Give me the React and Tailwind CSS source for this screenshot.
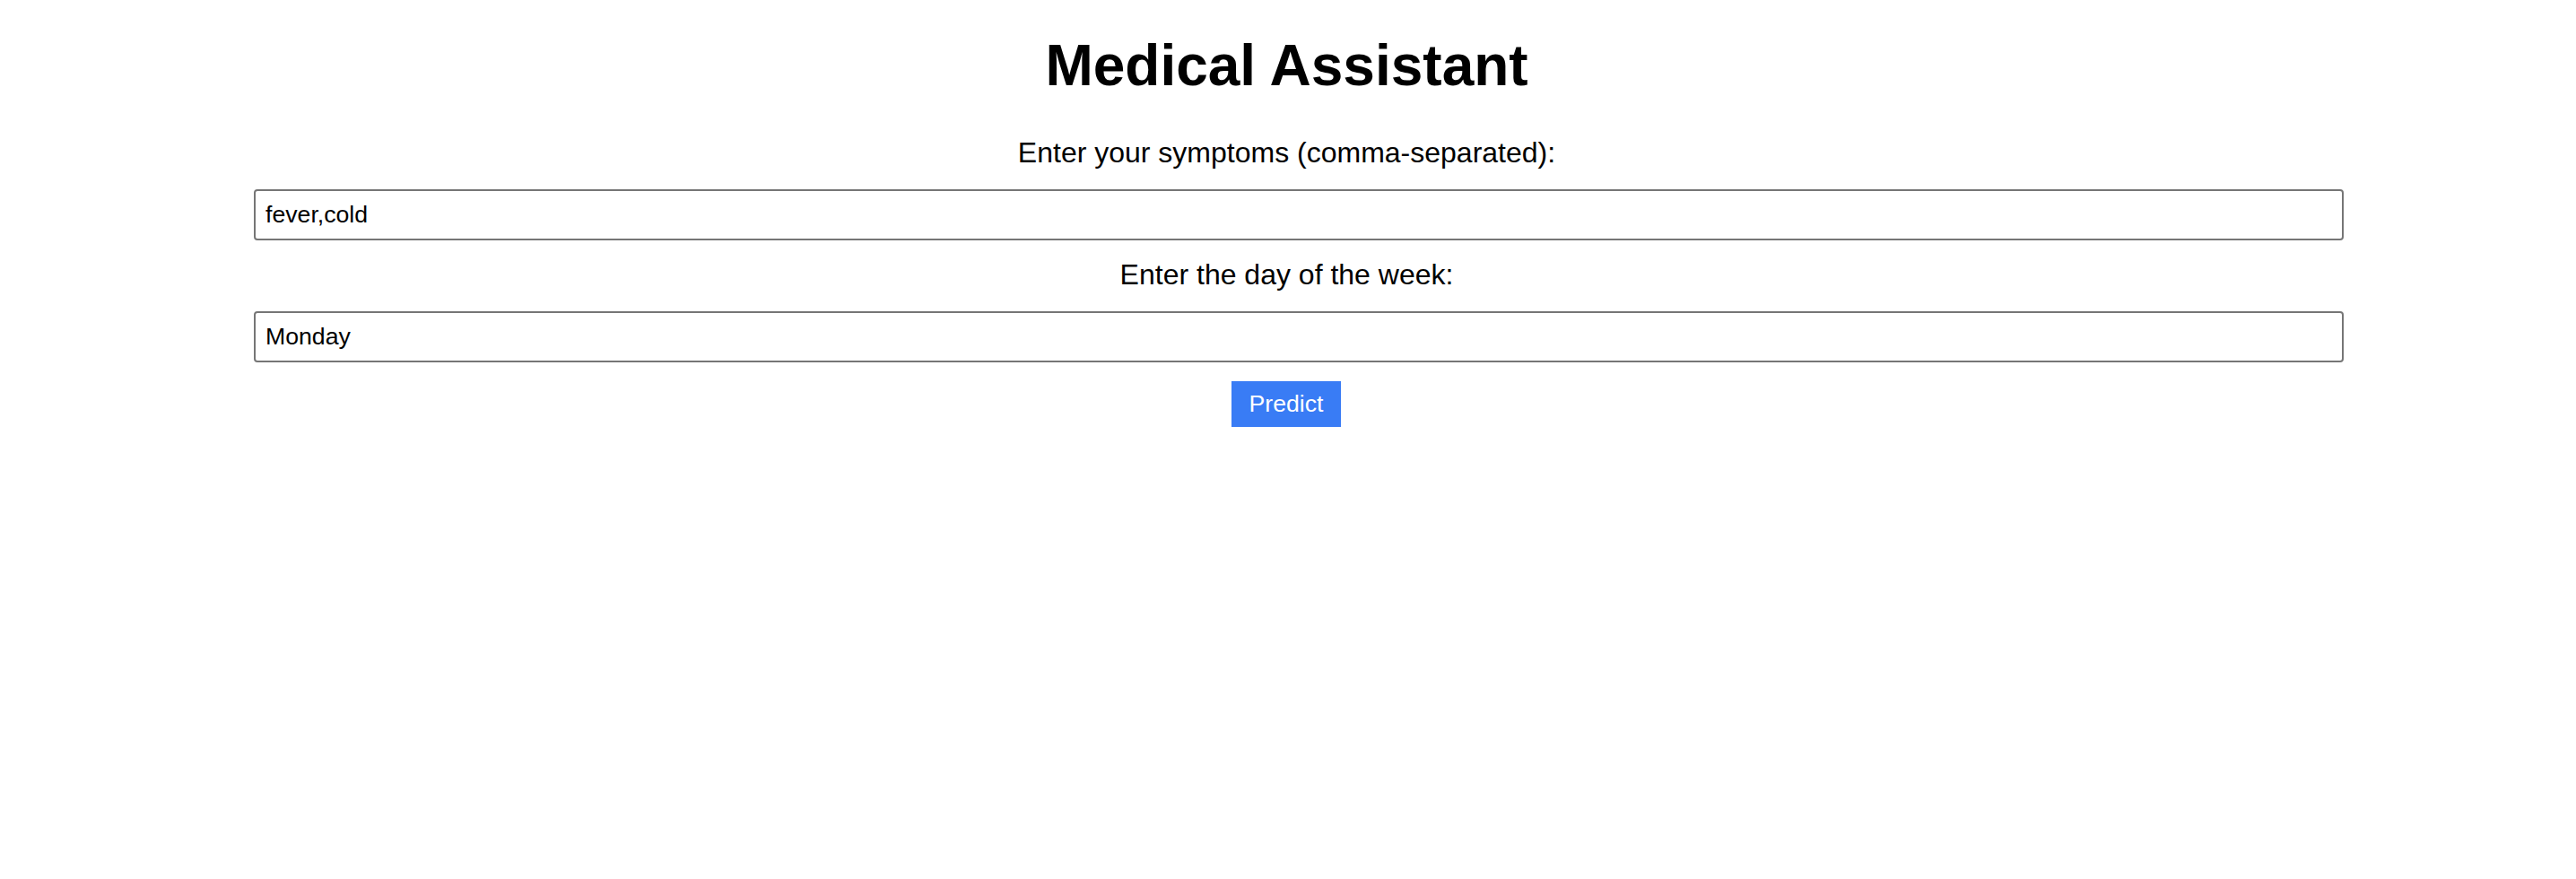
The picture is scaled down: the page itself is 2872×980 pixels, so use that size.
import { useState } from 'react';

export default function App() {
  const [symptoms, setSymptoms] = useState('fever,cold');
  const [day, setDay] = useState('Monday');

  return (
    <div className="min-h-screen bg-white text-black font-['Liberation_Sans',Arial,sans-serif]">
      <div className="flex flex-col items-center">
        <h1 className="mt-[36px] mr-[3px] text-[64px] leading-[74px] font-bold">Medical Assistant</h1>

        <form
          className="w-full flex flex-col items-center mt-[42px]"
          onSubmit={(e) => e.preventDefault()}
        >
          <label htmlFor="symptoms" className="mr-[3px] text-[32px] leading-[37px]">
            Enter your symptoms (comma-separated):
          </label>
          <div className="w-full pl-[283px] pr-[259px] mt-[22px]">
            <input
              id="symptoms"
              type="text"
              value={symptoms}
              onChange={(e) => setSymptoms(e.target.value)}
              className="w-full h-[57px] border-2 border-[#767676] rounded-[4px] px-[11px] text-[26.67px] bg-white outline-none"
            />
          </div>

          <label htmlFor="day" className="mt-[20px] mr-[3px] text-[32px] leading-[37px]">
            Enter the day of the week:
          </label>
          <div className="w-full pl-[283px] pr-[259px] mt-[22px]">
            <input
              id="day"
              type="text"
              value={day}
              onChange={(e) => setDay(e.target.value)}
              className="w-full h-[57px] border-2 border-[#767676] rounded-[4px] px-[11px] text-[26.67px] bg-white outline-none"
            />
          </div>

          {/* submit */}
          <button
            type="submit"
            className="mt-[21px] mr-[4px] h-[51px] w-[122px] bg-[#397cf5] text-white text-[26.67px] leading-none"
          >
            Predict
          </button>
        </form>
      </div>
    </div>
  );
}
